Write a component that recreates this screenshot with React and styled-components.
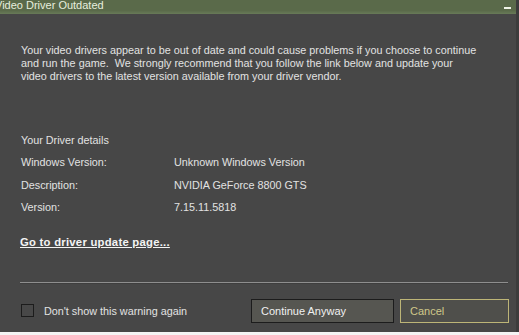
import React, { useState } from "react";
import styled, { createGlobalStyle } from "styled-components";

const GlobalStyle = createGlobalStyle`
  html, body {
    margin: 0;
    padding: 0;
    background: #f4f4f4;
  }
  body {
    font-family: "Liberation Sans", Arial, sans-serif;
  }
`;

const Window = styled.div`
  width: 519px;
  height: 332px;
  background-color: #474747;
  border-right: 3px solid #3c3c3c;
  box-sizing: border-box;
  display: flex;
  flex-direction: column;
  overflow: hidden;
`;

const TitleBar = styled.div`
  height: 14px;
  flex-shrink: 0;
  background: linear-gradient(#5a6a4a 0%, #5a6a4a 75%, #687a58 100%);
  display: flex;
  align-items: center;
  justify-content: space-between;
  padding-right: 5px;
`;

const Title = styled.span`
  color: #e6eede;
  font-size: 11px;
  margin-left: -5px;
  line-height: 14px;
  margin-top: -5px;
`;

const MinimizeBtn = styled.span`
  width: 7px;
  height: 2px;
  background: #f0f4e8;
  margin-top: 2px;
`;

const Body = styled.div`
  flex: 1;
  padding: 30px 7px 0 20px;
  color: #e2e2e2;
  font-size: 10.8px;
  display: flex;
  flex-direction: column;
`;

const Message = styled.p`
  margin: 0 0 0 1px;
  line-height: 13px;
`;

const Details = styled.div`
  margin-top: 46px;
  display: flex;
  flex-direction: column;
`;

const DetailsHeader = styled.div`
  line-height: 22px;
  padding-left: 1px;
`;

const DetailRow = styled.div`
  display: grid;
  grid-template-columns: 153px 1fr;
  line-height: 22.5px;
  padding-left: 1px;
`;

const UpdateLink = styled.a`
  margin-top: 16px;
  color: #f4f4f4;
  font-size: 11.3px;
  letter-spacing: 0.25px;
  font-weight: bold;
  text-decoration: underline;
  line-height: 14px;
  align-self: flex-start;
  cursor: pointer;
`;

const Separator = styled.hr`
  margin: 33px 0 0 0;
  width: 488px;
  border: none;
  border-top: 1px solid #8e8e8e;
  border-bottom: 1px solid #3e3e3e;
`;

const Footer = styled.div`
  margin-top: 15px;
  display: flex;
  align-items: center;
`;

const CheckLabel = styled.label`
  display: flex;
  align-items: center;
  gap: 10px;
  flex: 1;
  cursor: pointer;
`;

const CheckBox = styled.span`
  width: 11px;
  height: 11px;
  border: 1px solid #1c1c1c;
  background: ${(props) => (props.checked ? "#6a6a6a" : "#484848")};
  margin-left: 1px;
`;

const Button = styled.button`
  height: 24px;
  box-sizing: border-box;
  font-family: "Liberation Sans", Arial, sans-serif;
  font-size: 11px;
  text-align: left;
  padding: 0 9px;
  margin-left: ${(props) => props.gap || 0}px;
  width: ${(props) => props.width}px;
  border: 1px solid ${(props) => (props.primary ? "#1c1c1c" : "#bdb577")};
  background-color: ${(props) => (props.primary ? "#565651" : "#4f4f4b")};
  color: ${(props) => (props.primary ? "#f0f0f0" : "#cfc88a")};
  cursor: pointer;
`;

export default function App() {
  const [hide, setHide] = useState(false);

  return (
    <>
      <GlobalStyle />
      <Window>
        <TitleBar>
          <Title>Video Driver Outdated</Title>
          <MinimizeBtn />
        </TitleBar>
        <Body>
          <Message>
            Your video drivers appear to be out of date and could cause problems if you choose to continue
            <br />
            and run the game.&nbsp; We strongly recommend that you follow the link below and update your
            <br />
            video drivers to the latest version available from your driver vendor.
          </Message>
          <Details>
            <DetailsHeader>Your Driver details</DetailsHeader>
            <DetailRow>
              <span>Windows Version:</span>
              <span>Unknown Windows Version</span>
            </DetailRow>
            <DetailRow>
              <span>Description:</span>
              <span>NVIDIA GeForce 8800 GTS</span>
            </DetailRow>
            <DetailRow>
              <span>Version:</span>
              <span>7.15.11.5818</span>
            </DetailRow>
          </Details>
          <UpdateLink>Go to driver update page...</UpdateLink>
          <Separator />
          <Footer>
            <CheckLabel onClick={() => setHide(!hide)}>
              <CheckBox checked={hide} />
              <span>Don't show this warning again</span>
            </CheckLabel>
            <Button primary width={143}>Continue Anyway</Button>
            <Button width={109} gap={6}>Cancel</Button>
          </Footer>
        </Body>
      </Window>
    </>
  );
}
